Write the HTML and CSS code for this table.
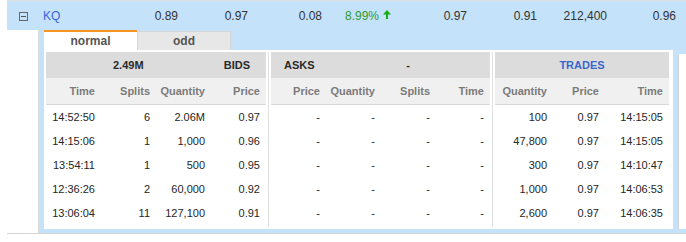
FILE: index.html
```html
<!DOCTYPE html>
<html>
<head>
<meta charset="utf-8">
<link rel="stylesheet" href="styles.css">
</head>
<body>
<div class="grid">
  <div class="main">
    <div class="toggle"><span class="minus"><span class="bar"></span></span></div>
    <div class="cell name">KQ</div>
    <div class="cell w70">0.89</div>
    <div class="cell w70">0.97</div>
    <div class="cell w74">0.08</div>
    <div class="cell w69 up">8.99%<svg class="arrow" width="8" height="9" viewBox="0 0 8 9"><path d="M4 0 L8 4.5 L5 4.5 L5 9 L3 9 L3 4.5 L0 4.5 Z" fill="#12b012"/></svg></div>
    <div class="cell w76">0.97</div>
    <div class="cell w70">0.91</div>
    <div class="cell w70">212,400</div>
    <div class="cell w69">0.96</div>
  </div>
  <div class="detail">
    <div class="blank"></div>
    <div class="detail-cell">
      <div class="detail-wrap">
        <div class="tabs">
          <div class="tab active">normal</div>
          <div class="tab idle">odd</div>
        </div>
        <div class="panel">
          <div class="section bids">
            <div class="hdr bids-hdr"><span>2.49M</span><span>BIDS</span></div>
            <div class="sub"><span>Time</span><span>Splits</span><span>Quantity</span><span>Price</span></div>
            <div class="drow"><span>14:52:50</span><span>6</span><span>2.06M</span><span>0.97</span></div>
            <div class="drow"><span>14:15:06</span><span>1</span><span>1,000</span><span>0.96</span></div>
            <div class="drow"><span>13:54:11</span><span>1</span><span>500</span><span>0.95</span></div>
            <div class="drow"><span>12:36:26</span><span>2</span><span>60,000</span><span>0.92</span></div>
            <div class="drow"><span>13:06:04</span><span>11</span><span>127,100</span><span>0.91</span></div>
          </div>
          <div class="sep"></div>
          <div class="section asks">
            <div class="hdr asks-hdr"><span>ASKS</span><span>-</span></div>
            <div class="sub"><span>Price</span><span>Quantity</span><span>Splits</span><span>Time</span></div>
            <div class="drow"><span>-</span><span>-</span><span>-</span><span>-</span></div>
            <div class="drow"><span>-</span><span>-</span><span>-</span><span>-</span></div>
            <div class="drow"><span>-</span><span>-</span><span>-</span><span>-</span></div>
            <div class="drow"><span>-</span><span>-</span><span>-</span><span>-</span></div>
            <div class="drow"><span>-</span><span>-</span><span>-</span><span>-</span></div>
          </div>
          <div class="sep"></div>
          <div class="section trades">
            <div class="hdr trades-hdr"><span>TRADES</span></div>
            <div class="sub"><span>Quantity</span><span>Price</span><span>Time</span></div>
            <div class="drow"><span>100</span><span>0.97</span><span>14:15:05</span></div>
            <div class="drow"><span>47,800</span><span>0.97</span><span>14:15:05</span></div>
            <div class="drow"><span>300</span><span>0.97</span><span>14:10:47</span></div>
            <div class="drow"><span>1,000</span><span>0.97</span><span>14:06:53</span></div>
            <div class="drow"><span>2,600</span><span>0.97</span><span>14:06:35</span></div>
          </div>
        </div>
      </div>
      <div class="side"></div>
    </div>
  </div>
</div>
</body>
</html>
```
FILE: styles.css
```css
body {
  margin: 0;
  font-family: "Liberation Sans", Arial, sans-serif;
  color: #333;
  background: #fff;
}
.grid {
  margin-left: 7px;
  border-top: 1px solid #dedede;
  border-bottom: 1px solid #d4d4d4;
}
.main {
  display: flex;
  align-items: center;
  height: 29px;
  background: #c5e2fb;
  font-size: 12px;
}
.toggle {
  width: 32px;
  display: flex;
  justify-content: center;
  flex: none;
}
.minus {
  width: 7px;
  height: 7px;
  border: 1px solid #666;
  display: flex;
  align-items: center;
  justify-content: center;
  margin-top: 1px;
}
.bar {
  width: 5px;
  height: 1px;
  background: #555;
}
.cell {
  flex: none;
  box-sizing: border-box;
  text-align: right;
  padding-right: 5px;
  color: #333;
}
.name {
  width: 74px;
  text-align: left;
  padding-left: 4px;
  color: #3a63d6;
}
.w69 { width: 69px; }
.w70 { width: 70px; }
.w74 { width: 74px; }
.w76 { width: 76px; }
.up {
  color: #2f9a2f;
  display: flex;
  align-items: center;
  justify-content: flex-end;
  gap: 4px;
}
.arrow { display: block; margin-top: -2px; }

.detail {
  display: flex;
}
.blank {
  width: 31px;
  flex: none;
  border-right: 1px solid #dcdcdc;
}
.detail-cell {
  flex: 1;
  display: flex;
  align-items: flex-start;
  background: #c5e2fb;
  padding: 0 0 4px 5px;
  overflow: hidden;
}
.detail-wrap {
  width: 629px;
  flex: none;
}
.tabs {
  display: flex;
  height: 20px;
}
.tab {
  font-size: 12px;
  font-weight: bold;
  color: #555;
  text-align: center;
  box-sizing: border-box;
}
.active {
  width: 93px;
  background: #fff;
  border-top: 2px solid #f7941e;
  line-height: 18px;
}
.idle {
  width: 94px;
  margin-top: 1px;
  height: 19px;
  line-height: 18px;
  background: #e7e7e7;
  border: 1px solid #d6d6d6;
  border-bottom: none;
}
.panel {
  display: flex;
  background: #fff;
  padding: 2px 4px 2px 2px;
}
.section {
  display: flex;
  flex-direction: column;
  padding-bottom: 2px;
  font-size: 11px;
}
.bids { width: 220px; }
.asks { width: 219px; }
.trades { width: 174px; }
.sep {
  width: 1px;
  margin: 0 2px;
  background: #e0e0e0;
}
.hdr {
  height: 26px;
  display: flex;
  align-items: center;
  background: #dcdcdc;
  font-weight: bold;
  color: #2a2a2a;
}
.bids-hdr {
  justify-content: space-between;
  padding: 0 16px 0 67px;
}
.asks-hdr {
  justify-content: space-between;
  padding: 0 80px 0 13px;
}
.trades-hdr {
  justify-content: center;
  color: #3a66cc;
}
.sub, .drow {
  display: grid;
  align-items: center;
}
.sub {
  height: 26px;
  background: #f0f0f0;
  border-bottom: 1px solid #d8d8d8;
  font-weight: bold;
  color: #7b7b7b;
}
.drow {
  height: 24px;
  color: #262626;
}
.sub span, .drow span {
  text-align: right;
  padding-right: 6px;
}
.bids .sub, .bids .drow { grid-template-columns: 55px 55px 55px 55px; }
.asks .sub, .asks .drow { grid-template-columns: 55px 55px 55px 54px; }
.trades .sub, .trades .drow { grid-template-columns: 58px 52px 64px; }
.side {
  flex: 1;
  margin: 24px 0 0 5px;
  height: 175px;
  background: #fff;
  border-left: 1px solid #cfcfcf;
}
```
